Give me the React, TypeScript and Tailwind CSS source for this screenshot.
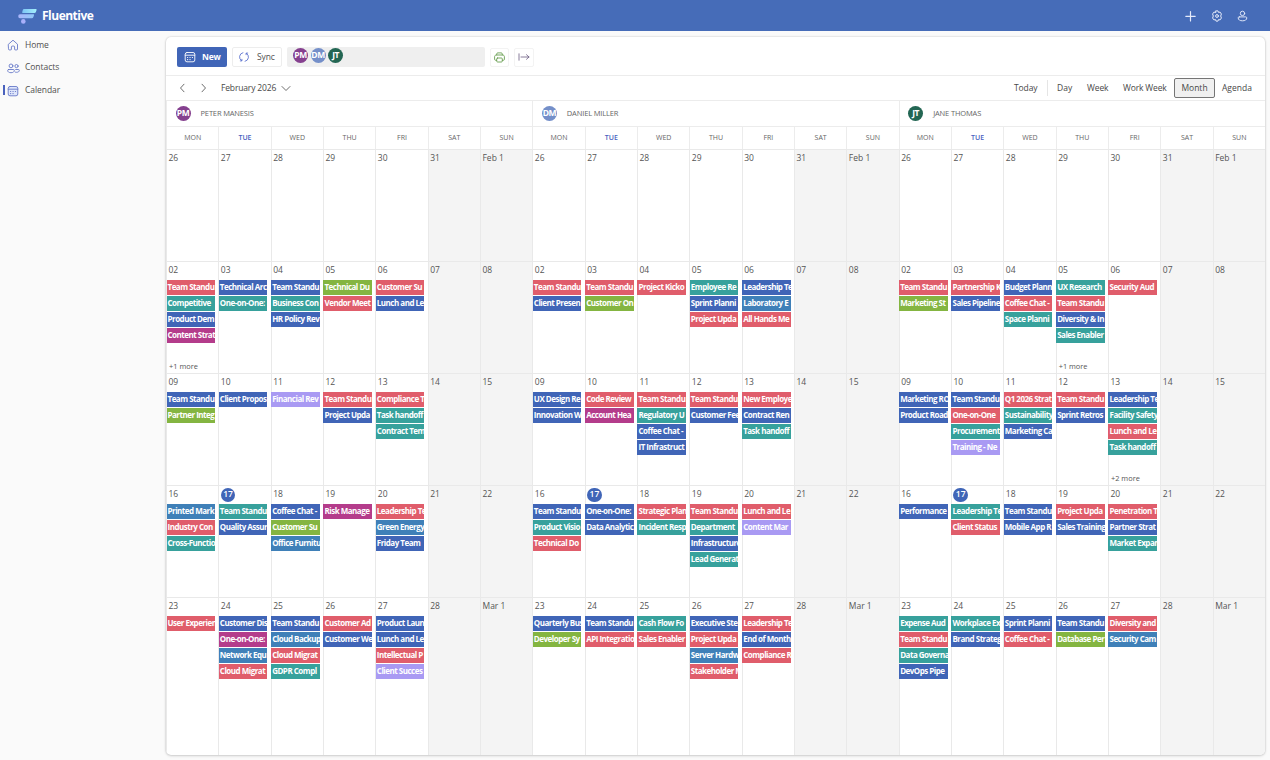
import clsx from "clsx";

type Color = "red" | "blue" | "teal" | "green" | "plum" | "violet" | "azure";

type Item = [Color, string];

type Day = {
  label: string;
  items?: Item[];
  more?: number;
};

type Person = {
  name: string;
  initials: string;
  avatar: string;
  days: Record<string, Item[]>;
  more: Record<string, number>;
};

const colors: Record<Color, string> = {
  red: "bg-[#e05d6b]",
  blue: "bg-[#4065b7]",
  teal: "bg-[#37a19c]",
  green: "bg-[#84b541]",
  plum: "bg-[#b43c8b]",
  violet: "bg-[#a99af3]",
  azure: "bg-[#3f80b8]",
};

const weekDays = ["MON", "TUE", "WED", "THU", "FRI", "SAT", "SUN"];

const weeks = [
  ["26", "27", "28", "29", "30", "31", "Feb 1"],
  ["02", "03", "04", "05", "06", "07", "08"],
  ["09", "10", "11", "12", "13", "14", "15"],
  ["16", "17", "18", "19", "20", "21", "22"],
  ["23", "24", "25", "26", "27", "28", "Mar 1"],
];

// keys are "<week index>-<day index>"
const people: Person[] = [
  {
    name: "PETER MANESIS",
    initials: "PM",
    avatar: "bg-[#85408f]",
    more: { "1-0": 1 },
    days: {
      "1-0": [["red", "Team Standu"], ["teal", "Competitive"], ["blue", "Product Dem"], ["plum", "Content Strat"]],
      "1-1": [["blue", "Technical Arc"], ["teal", "One-on-One:"]],
      "1-2": [["blue", "Team Standu"], ["teal", "Business Con"], ["blue", "HR Policy Rev"]],
      "1-3": [["green", "Technical Du"], ["red", "Vendor Meet"]],
      "1-4": [["red", "Customer Su"], ["blue", "Lunch and Le"]],
      "2-0": [["blue", "Team Standu"], ["green", "Partner Integ"]],
      "2-1": [["blue", "Client Propos"]],
      "2-2": [["violet", "Financial Rev"]],
      "2-3": [["red", "Team Standu"], ["blue", "Project Upda"]],
      "2-4": [["red", "Compliance T"], ["teal", "Task handoff"], ["teal", "Contract Tem"]],
      "3-0": [["azure", "Printed Mark"], ["red", "Industry Con"], ["teal", "Cross-Functio"]],
      "3-1": [["teal", "Team Standu"], ["blue", "Quality Assur"]],
      "3-2": [["blue", "Coffee Chat -"], ["green", "Customer Su"], ["azure", "Office Furnitu"]],
      "3-3": [["plum", "Risk Manage"]],
      "3-4": [["red", "Leadership Te"], ["azure", "Green Energy"], ["blue", "Friday Team"]],
      "4-0": [["red", "User Experien"]],
      "4-1": [["blue", "Customer Dis"], ["plum", "One-on-One:"], ["azure", "Network Equ"], ["red", "Cloud Migrat"]],
      "4-2": [["blue", "Team Standu"], ["azure", "Cloud Backup"], ["red", "Cloud Migrat"], ["teal", "GDPR Compl"]],
      "4-3": [["red", "Customer Ad"], ["blue", "Customer We"]],
      "4-4": [["blue", "Product Laun"], ["blue", "Lunch and Le"], ["red", "Intellectual P"], ["violet", "Client Succes"]],
    },
  },
  {
    name: "DANIEL MILLER",
    initials: "DM",
    avatar: "bg-[#748fc9]",
    more: {},
    days: {
      "1-0": [["red", "Team Standu"], ["blue", "Client Presen"]],
      "1-1": [["red", "Team Standu"], ["green", "Customer On"]],
      "1-2": [["red", "Project Kicko"]],
      "1-3": [["teal", "Employee Re"], ["blue", "Sprint Planni"], ["red", "Project Upda"]],
      "1-4": [["blue", "Leadership Te"], ["azure", "Laboratory E"], ["red", "All Hands Me"]],
      "2-0": [["blue", "UX Design Re"], ["blue", "Innovation W"]],
      "2-1": [["red", "Code Review"], ["plum", "Account Hea"]],
      "2-2": [["red", "Team Standu"], ["teal", "Regulatory U"], ["blue", "Coffee Chat -"], ["blue", "IT Infrastruct"]],
      "2-3": [["red", "Team Standu"], ["blue", "Customer Fee"]],
      "2-4": [["red", "New Employe"], ["blue", "Contract Ren"], ["teal", "Task handoff"]],
      "3-0": [["blue", "Team Standu"], ["teal", "Product Visio"], ["red", "Technical Do"]],
      "3-1": [["blue", "One-on-One:"], ["blue", "Data Analytic"]],
      "3-2": [["red", "Strategic Plan"], ["teal", "Incident Resp"]],
      "3-3": [["red", "Team Standu"], ["teal", "Department"], ["blue", "Infrastructure"], ["teal", "Lead Generat"]],
      "3-4": [["red", "Lunch and Le"], ["violet", "Content Mar"]],
      "4-0": [["blue", "Quarterly Bus"], ["green", "Developer Sy"]],
      "4-1": [["blue", "Team Standu"], ["red", "API Integratio"]],
      "4-2": [["teal", "Cash Flow Fo"], ["red", "Sales Enabler"]],
      "4-3": [["blue", "Executive Ste"], ["red", "Project Upda"], ["azure", "Server Hardw"], ["red", "Stakeholder M"]],
      "4-4": [["red", "Leadership Te"], ["blue", "End of Month"], ["red", "Compliance R"]],
    },
  },
  {
    name: "JANE THOMAS",
    initials: "JT",
    avatar: "bg-[#236653]",
    more: { "1-3": 1, "2-4": 2 },
    days: {
      "1-0": [["red", "Team Standu"], ["green", "Marketing St"]],
      "1-1": [["red", "Partnership K"], ["blue", "Sales Pipeline"]],
      "1-2": [["blue", "Budget Plann"], ["red", "Coffee Chat -"], ["teal", "Space Planni"]],
      "1-3": [["teal", "UX Research"], ["red", "Team Standu"], ["blue", "Diversity & In"], ["teal", "Sales Enabler"]],
      "1-4": [["red", "Security Aud"]],
      "2-0": [["blue", "Marketing RO"], ["blue", "Product Road"]],
      "2-1": [["blue", "Team Standu"], ["red", "One-on-One"], ["teal", "Procurement"], ["violet", "Training - Ne"]],
      "2-2": [["red", "Q1 2026 Strat"], ["teal", "Sustainability"], ["blue", "Marketing Ca"]],
      "2-3": [["red", "Team Standu"], ["blue", "Sprint Retros"]],
      "2-4": [["blue", "Leadership Te"], ["teal", "Facility Safety"], ["red", "Lunch and Le"], ["teal", "Task handoff"]],
      "3-0": [["blue", "Performance"]],
      "3-1": [["teal", "Leadership Te"], ["red", "Client Status"]],
      "3-2": [["blue", "Team Standu"], ["blue", "Mobile App R"]],
      "3-3": [["red", "Project Upda"], ["blue", "Sales Training"]],
      "3-4": [["red", "Penetration T"], ["blue", "Partner Strat"], ["teal", "Market Expan"]],
      "4-0": [["teal", "Expense Aud"], ["red", "Team Standu"], ["teal", "Data Governa"], ["blue", "DevOps Pipe"]],
      "4-1": [["teal", "Workplace Ex"], ["blue", "Brand Strateg"]],
      "4-2": [["blue", "Sprint Planni"], ["red", "Coffee Chat -"]],
      "4-3": [["blue", "Team Standu"], ["green", "Database Per"]],
      "4-4": [["red", "Diversity and"], ["azure", "Security Cam"]],
    },
  },
];

const iconProps = {
  fill: "none",
  stroke: "currentColor",
  strokeLinecap: "round" as const,
  strokeLinejoin: "round" as const,
};

const Logo = () => (
  <svg width="20" height="16" viewBox="0 0 20 16">
    <defs>
      <linearGradient id="top" x1="0" x2="1">
        <stop offset="0" stopColor="#7cc4f5" />
        <stop offset="1" stopColor="#a4f0fb" />
      </linearGradient>
      <linearGradient id="mid" x1="0" x2="1">
        <stop offset="0" stopColor="#a9b4fa" />
        <stop offset="1" stopColor="#8fc8f8" />
      </linearGradient>
    </defs>
    <path d="M6 1h11.800c.8 0 .9.600.7 1.300l-.6 1.700c-.3.700-.8 1-1.500 1H5.200c-1 0-1.200-.6-.9-1.300l.5-1.700C5 1.300 5.400 1 6 1z" fill="url(#top)" />
    <path d="M2 6.300h13.200c.8 0 1 .5.700 1.200l-.5 1.500c-.3.800-.8 1.200-1.600 1.200H2C.9 10.200.3 9.300.3 8.200S.9 6.300 2 6.300z" fill="url(#mid)" />
    <circle cx="5.300" cy="13.400" r="2.300" fill="#a9b0fa" />
  </svg>
);

const HomeIcon = () => (
  <svg width="12" height="12" viewBox="0 0 12 12" {...iconProps} strokeWidth="0.900">
    <path d="M1.500 5.200 6 1.200l4.500 4v5a.7.700 0 0 1-.7.700H8.200a.6.600 0 0 1-.6-.6V8a.9.900 0 0 0-.9-.9H5.300a.9.900 0 0 0-.9.900v2.300a.6.600 0 0 1-.6.600H2.200a.7.700 0 0 1-.7-.7z" />
  </svg>
);

const ContactsIcon = () => (
  <svg width="13" height="12" viewBox="0 0 13 12" {...iconProps} strokeWidth="0.900">
    <circle cx="4" cy="3.900" r="1.900" />
    <circle cx="9.500" cy="4.100" r="1.600" />
    <path d="M1.600 7.500h4.800c.6 0 .9.400.9.900 0 1.500-1.300 2.300-3.300 2.300S.7 9.900.7 8.400c0-.5.300-.9.900-.9zM8.700 7.500h2.800c.5 0 .8.300.8.800 0 1.300-1.100 2-2.800 2-.5 0-.9 0-1.300-.2" />
  </svg>
);

const CalendarIcon = ({ filled }: { filled?: boolean }) => (
  <svg width="12" height="12" viewBox="0 0 12 12" {...iconProps} strokeWidth="0.900">
    <rect x="1.200" y="1.500" width="9.600" height="9.300" rx="1.800" fill={filled ? "#dfe6fb" : "none"} />
    <path d="M1.200 4.200h9.600" />
    <path d="M3.600 6.500h.1M6 6.500h.1M8.400 6.500h.1M3.600 8.600h.1M6 8.600h.1" strokeWidth="1.200" />
  </svg>
);

const SyncIcon = () => (
  <svg width="12" height="12" viewBox="0 0 12 12" {...iconProps} strokeWidth="0.900">
    <path d="M3.600 9.700A4.400 4.400 0 0 1 4.900 1.700M8.400 2.300A4.400 4.400 0 0 1 7.100 10.300M2.300 9.900H3.900V8.300M9.700 2.100H8.100V3.700" />
  </svg>
);

const PrintIcon = () => (
  <svg width="11" height="11" viewBox="0 0 11 11" {...iconProps} strokeWidth="0.900">
    <path d="M2.700 3V2c0-.7.400-1.100 1.100-1.100h3.400c.7 0 1.100.4 1.100 1.100v1M2.700 8.300H1.600C1 8.300.600 7.900.600 7.300V4.700C.600 3.700 1.300 3 2.300 3h6.400c1 0 1.700.7 1.700 1.700v2.600c0 .6-.4 1-1 1H8.300" />
    <rect x="2.700" y="6" width="5.600" height="4" rx="0.900" />
  </svg>
);

const ExportIcon = () => (
  <svg width="12" height="10" viewBox="0 0 12 10" {...iconProps} strokeWidth="0.800">
    <path d="M1 1.800v6.400M3 5h8M8.500 2.700 11 5 8.500 7.300" />
  </svg>
);

const Chevron = ({ d, w = 8, h = 10 }: { d: string; w?: number; h?: number }) => (
  <svg width={w} height={h} viewBox={`0 0 ${w} ${h}`} {...iconProps} strokeWidth="0.800">
    <path d={d} />
  </svg>
);

const PlusIcon = () => (
  <svg width="12" height="12" viewBox="0 0 12 12" {...iconProps} strokeWidth="1.200">
    <path d="M6.500 1.500v9.500M1.800 6.300h9.400" />
  </svg>
);

const GearIcon = () => (
  <svg width="12" height="12" viewBox="0 0 12 12" {...iconProps} strokeWidth="1">
    <path d="M5 .9h2l.5 1.500 1.600-.3 1.300 1.900L9.700 6l.7 2-1.300 1.900-1.600-.3L7 11.100H5l-.5-1.500-1.600.3L1.600 8l.7-2-.7-2 1.300-1.900 1.600.3z" />
    <circle cx="6" cy="6" r="1.400" />
  </svg>
);

const UserIcon = () => (
  <svg width="11" height="12" viewBox="0 0 11 12" {...iconProps} strokeWidth="0.950">
    <circle cx="5.500" cy="3.400" r="2.200" />
    <path d="M2.300 6.900h6.400c.7 0 1.100.4 1.100 1C9.800 9.900 8 10.800 5.500 10.800S1.200 9.900 1.200 7.900c0-.6.400-1 1.100-1z" />
  </svg>
);

const Avatar = ({ person }: { person: Person }) => (
  <span
    className={clsx(
      "flex h-[15px] w-[15px] shrink-0 items-center justify-center rounded-full text-[8.5px] font-bold tracking-[-0.5px] text-white",
      person.avatar
    )}
  >
    {person.initials}
  </span>
);

const Header = () => (
  <header className="flex h-[31px] items-center bg-[#466cb8] pt-px pr-[22px] pl-[18px] text-white">
    <Logo />
    <span className="ml-1 text-[12px] font-bold tracking-[-0.5px]">Fluentive</span>
    <div className="ml-auto flex items-center gap-[14.5px] text-[#e4eafa]">
      <PlusIcon />
      <GearIcon />
      <UserIcon />
    </div>
  </header>
);

const Sidebar = () => (
  <nav className="flex w-[166px] flex-col pt-[2.5px] text-[8.5px] text-[#505050]">
    {[
      { label: "Home", icon: <HomeIcon /> },
      { label: "Contacts", icon: <ContactsIcon /> },
      { label: "Calendar", icon: <CalendarIcon filled />, active: true },
    ].map((link) => (
      <a key={link.label} className="flex h-[22.8px] items-center pl-[3px]">
        <span className={clsx("h-[10px] w-[1.5px]", link.active && "bg-[#4a62bd]")} />
        <span className="ml-[2px] flex w-[13px] justify-center pt-[1px] text-[#6879c8]">{link.icon}</span>
        <span className="ml-[5.5px] tracking-[-0.05px]">{link.label}</span>
      </a>
    ))}
  </nav>
);

const Toolbar = () => (
  <div className="flex h-[39px] shrink-0 items-center border-b border-[#ececec] pt-[2px] pl-[11px] text-[8.5px]">
    <button className="flex h-5 w-[50px] items-center gap-[6px] rounded-[2px] bg-[#4065b7] pl-[7px] font-bold tracking-[-0.2px] text-white">
      <CalendarIcon />
      <span className="pt-px">New</span>
    </button>
    <button className="ml-[5px] flex h-5 w-[50px] items-center gap-[7px] rounded-[2px] border border-[#ededed] pl-[5px] text-[#505050]">
      <span className="text-[#5f74cf]">
        <SyncIcon />
      </span>
      <span className="pt-px tracking-[-0.1px]">Sync</span>
    </button>
    <div className="ml-[5px] flex h-5 w-[198px] gap-[2.5px] rounded-[2px] bg-[#efefef] pt-px pl-[6px]">
      {people.map((person) => (
        <Avatar key={person.initials} person={person} />
      ))}
    </div>
    <button className="ml-[5px] flex h-[19px] w-[19px] items-center justify-center rounded-[2px] border border-[#f3f3f3] text-[#6a9f52]">
      <PrintIcon />
    </button>
    <button className="ml-[5px] flex h-[19px] w-[20px] items-center justify-center rounded-[2px] border border-[#f3f3f3] text-[#6b5a80]">
      <ExportIcon />
    </button>
  </div>
);

const Navigation = () => (
  <div className="flex h-[25px] shrink-0 items-center border-b border-[#ececec] pr-[12px] pl-[12px] text-[8.5px] text-[#484848]">
    <Chevron d="M6 1.200 2.500 5 6 8.800" />
    <span className="ml-[14px] flex">
      <Chevron d="M2 1.200 5.500 5 2 8.800" />
    </span>
    <span className="mr-[5px] ml-[13px] w-[55px] pt-px tracking-[-0.15px] whitespace-nowrap">February 2026</span>
    <Chevron d="M1 1.500 5 5.500 9 1.500" w={10} h={7} />
    <div className="ml-auto flex items-center whitespace-nowrap">
      <span className="w-[33px] pt-px tracking-[-0.1px]">Today</span>
      <span className="h-4 w-[10px] border-l border-[#e5e5e5]" />
      <span className="w-[30px] pt-px">Day</span>
      <span className="w-[36px] pt-px tracking-[-0.1px]">Week</span>
      <span className="w-[51px] pt-px tracking-[-0.15px]">Work Week</span>
      <span className="flex h-5 w-[41px] items-center justify-center rounded-[2px] border border-[#757575] bg-[#f0f0f0] pt-px">
        Month
      </span>
      <span className="ml-[7px] w-[31px] pt-px">Agenda</span>
    </div>
  </div>
);

const DayCell = ({ label, items = [], more }: Day) => {
  const today = label === "17";
  return (
    <>
      <div className="flex h-[17.5px] shrink-0 items-center pl-[1.5px] text-[8.5px] text-[#555]">
        {today ? (
          <span className="flex h-[14.5px] w-[14.5px] items-center justify-center rounded-full bg-[#4065b7] font-semibold text-white">
            {label}
          </span>
        ) : (
          label
        )}
      </div>
      <div className="-ml-px flex flex-col gap-[1.2px] pl-[0.5px]">
        {items.map(([color, title]) => (
          <div
            key={title}
            className={clsx(
              "h-[15px] w-[48.5px] overflow-hidden pl-[1px] text-[8px] leading-[14px] font-bold tracking-[-0.5px] whitespace-nowrap text-white",
              colors[color]
            )}
          >
            {title}
          </div>
        ))}
      </div>
      {more && <span className="mt-auto mb-px pl-[2px] text-[7.4px] leading-3 text-[#555]">+{more} more</span>}
    </>
  );
};

const PersonCalendar = ({ person }: { person: Person }) => (
  <section className="flex min-w-0 flex-1 flex-col">
    <div className="flex h-[26px] items-center border-b border-l border-[#ececec] pl-[8.5px] text-[7.5px] text-[#666]">
      <Avatar person={person} />
      <span className="ml-[10px] tracking-[-0.15px]">{person.name}</span>
    </div>
    <div className="grid h-[22px] grid-cols-7">
      {weekDays.map((day) => (
        <div
          key={day}
          className={clsx(
            "flex items-center justify-center border-l border-[#ececec] text-[7px]",
            day === "TUE" ? "font-semibold text-[#4a5fc0]" : "text-[#666]"
          )}
        >
          {day}
        </div>
      ))}
    </div>
    {weeks.map((week, w) => (
      <div key={w} className={clsx("grid grid-cols-7", w < 4 ? "h-[112px]" : "flex-1")}>
        {week.map((label, d) => (
          <div
            key={label}
            className={clsx(
              "flex min-w-0 flex-col border-t border-l border-[#e9e9e9]",
              d > 4 && "bg-[#f4f4f4]"
            )}
          >
            <DayCell label={label} items={person.days[`${w}-${d}`]} more={person.more[`${w}-${d}`]} />
          </div>
        ))}
      </div>
    ))}
  </section>
);

const App = () => {
  return (
    <div className="flex h-[760px] w-[1270px] flex-col overflow-hidden bg-[#fafafa] font-['Open_Sans',sans-serif]">
      <Header />
      <div className="flex flex-1">
        <Sidebar />
        <main className="mt-[6px] flex h-[718px] w-[1099px] flex-col overflow-hidden rounded-[5px] bg-white shadow-[0_0_2px_rgba(0,0,0,0.2),0_1px_3px_rgba(0,0,0,0.14)]">
          <Toolbar />
          <Navigation />
          <div className="flex flex-1">
            {people.map((person) => (
              <PersonCalendar key={person.name} person={person} />
            ))}
          </div>
        </main>
      </div>
    </div>
  );
};

export default App;
